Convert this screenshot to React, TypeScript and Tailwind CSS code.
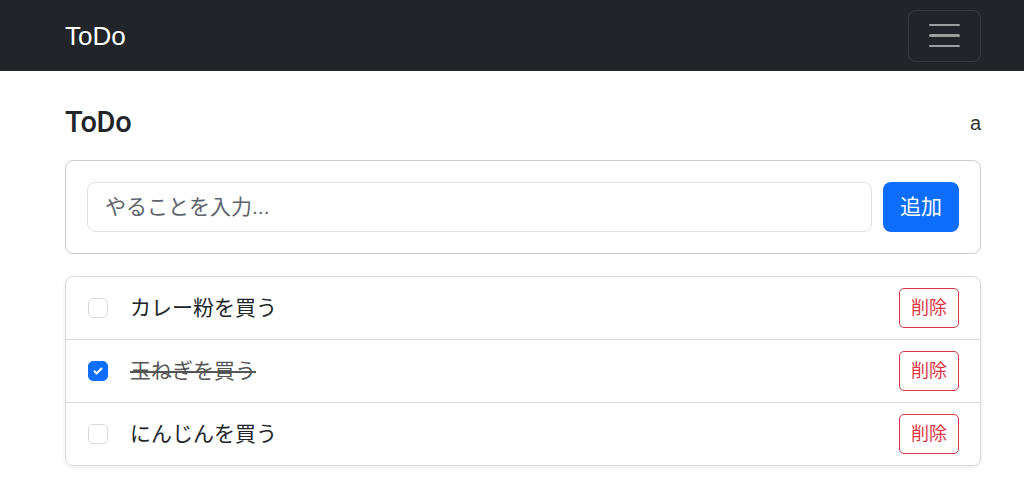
import { useState } from "react";

type Todo = { id: number; text: string; done: boolean };

const initial: Todo[] = [
  { id: 1, text: "カレー粉を買う", done: false },
  { id: 2, text: "玉ねぎを買う", done: true },
  { id: 3, text: "にんじんを買う", done: false },
];

export default function App() {
  const [todos, setTodos] = useState<Todo[]>(initial);
  const [draft, setDraft] = useState("");

  const add = () => {
    if (!draft.trim()) return;
    setTodos([...todos, { id: Date.now(), text: draft.trim(), done: false }]);
    setDraft("");
  };

  return (
    <div className="min-h-[499px] bg-white text-[#212529] font-['Liberation_Sans','Noto_Sans_CJK_JP',sans-serif]">
      <nav className="h-[71px] bg-[#212529]">
        <div className="flex h-full items-center justify-between pl-[65px] pr-[43px]">
          <a className="text-[26px] leading-none text-white" href="#">ToDo</a>
          <button className="flex h-[52px] w-[73px] flex-col items-center justify-center gap-[8px] rounded-[8px] border border-white/10" aria-label="menu">
            <span className="block h-[2.5px] w-[31px] rounded bg-white/55" />
            <span className="block h-[2.5px] w-[31px] rounded bg-white/55" />
            <span className="block h-[2.5px] w-[31px] rounded bg-white/55" />
          </button>
        </div>
      </nav>

      <main className="pl-[65px] pr-[43px] pt-[34px]">
        <div className="mb-[20px] flex items-center justify-between">
          <h1 className="font-['Roboto',sans-serif] text-[29px] font-medium leading-[35px] tracking-[-0.3px]">ToDo</h1>
          <span className="text-[20px] text-[#333]">a</span>
        </div>

        <div className="flex gap-[11px] rounded-[8px] border border-black/20 p-[21px]">
          <input
            className="h-[50px] flex-1 rounded-[8px] border border-[#dee2e6] px-[17px] text-[21px] placeholder:text-[#5c636a] outline-none"
            placeholder="やることを入力..."
            value={draft}
            onChange={(e) => setDraft(e.target.value)}
          />
          <button onClick={add} className="h-[50px] w-[76px] rounded-[8px] bg-[#0d6efd] text-[21px] text-white">
            追加
          </button>
        </div>

        <ul className="mt-[22px] overflow-hidden rounded-[8px] border border-black/15 shadow-[0_2px_4px_rgba(0,0,0,0.08)]">
          {todos.map((t, i) => (
            <li
              key={t.id}
              className={`flex items-center pl-[22px] pr-[21px] ${i > 0 ? "h-[63px] border-t border-black/15" : "h-[62px]"}`}
            >
              <button
                onClick={() => setTodos(todos.map((x) => (x.id === t.id ? { ...x, done: !x.done } : x)))}
                className={`flex h-[20px] w-[20px] items-center justify-center rounded-[5px] border ${
                  t.done ? "border-[#0d6efd] bg-[#0d6efd]" : "border-[#d6dadf] bg-white"
                }`}
                aria-label="toggle"
              >
                {t.done && (
                  <svg viewBox="0 0 20 20" className="h-[14px] w-[14px]">
                    <path d="M5 10.5l3 3 7-7" fill="none" stroke="#fff" strokeWidth="3" strokeLinecap="round" strokeLinejoin="round" />
                  </svg>
                )}
              </button>
              <span className={`ml-[22px] flex-1 text-[21px] ${t.done ? "text-[#555] line-through" : ""}`}>{t.text}</span>
              <button
                onClick={() => setTodos(todos.filter((x) => x.id !== t.id))}
                className="h-[40px] w-[60px] rounded-[5px] border border-[#dc3545] text-[18px] text-[#dc3545]"
              >
                削除
              </button>
            </li>
          ))}
        </ul>
      </main>
    </div>
  );
}
